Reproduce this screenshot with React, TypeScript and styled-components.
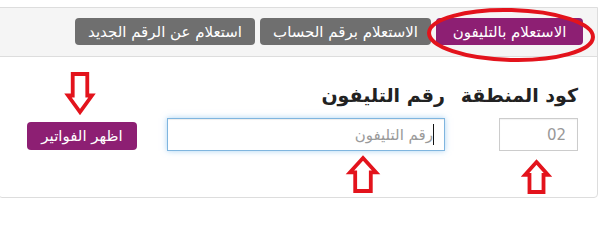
import styled, { createGlobalStyle } from 'styled-components';

const GlobalStyle = createGlobalStyle`
  html, body {
    margin: 0;
    padding: 0;
    background: #ffffff;
  }
  body {
    font-family: "DejaVu Sans", "Noto Sans", sans-serif;
    overflow: hidden;
  }
`;

const Panel = styled.div`
  position: relative;
  direction: rtl;
  width: 600px;
  margin: 7px 0 0 -2px;
  border: 1px solid #dddddd;
  border-radius: 0 0 4px 4px;
  box-sizing: border-box;
  background: #ffffff;
`;

const TabBar = styled.div`
  display: flex;
  gap: 5px;
  padding: 10px 14px 11px;
  background: #f5f5f5;
  border-bottom: 1px solid #dddddd;
`;

const Tab = styled.button<{ $active?: boolean; $w: number }>`
  width: ${(p) => p.$w}px;
  height: 27px;
  padding: 0;
  border: none;
  border-radius: 4px;
  background: ${(p) => (p.$active ? '#8d1f73' : '#6f6f6f')};
  color: #ffffff;
  font-family: "DejaVu Sans", sans-serif;
  font-size: 15px;
  direction: rtl;
  cursor: pointer;
`;

const Body = styled.div`
  display: flex;
  align-items: flex-end;
  padding: 25px 19px 46px;
`;

const Field = styled.div<{ $w: number; $gap?: number }>`
  display: flex;
  flex-direction: column;
  align-items: flex-start;
  width: ${(p) => p.$w}px;
  margin-right: ${(p) => p.$gap ?? 0}px;
`;

const Label = styled.label`
  white-space: nowrap;
  font-size: 19px;
  font-weight: bold;
  line-height: 26px;
  color: #222222;
  margin-bottom: 10px;
`;

const InputWrap = styled.div`
  position: relative;
  width: 100%;
`;

const TextInput = styled.input<{ $focus?: boolean }>`
  box-sizing: border-box;
  width: 100%;
  height: 33px;
  padding: 0 11px;
  direction: rtl;
  font-family: "DejaVu Sans", sans-serif;
  font-size: 15px;
  color: #999999;
  border: 1px solid ${(p) => (p.$focus ? '#7fb5df' : '#cccccc')};
  box-shadow: ${(p) =>
    p.$focus
      ? 'inset 0 1px 1px rgba(0,0,0,.075), 0 0 6px rgba(102,175,233,.55)'
      : 'inset 0 1px 1px rgba(0,0,0,.05)'};
  outline: none;
  background: #ffffff;
  &::placeholder {
    color: #9a9a9a;
  }
`;

const Caret = styled.span`
  position: absolute;
  right: 11px;
  top: 6px;
  width: 1px;
  height: 21px;
  background: #111111;
`;

const ShowButton = styled.button`
  width: 110px;
  height: 28px;
  margin: 0 30px 1px 0;
  padding: 0;
  border: none;
  border-radius: 4px;
  background: #8d1f73;
  color: #ffffff;
  font-family: "DejaVu Sans", sans-serif;
  font-size: 15px;
  cursor: pointer;
`;

const Mark = styled.svg<{ $x: number; $y: number }>`
  position: absolute;
  left: ${(p) => p.$x}px;
  top: ${(p) => p.$y}px;
  overflow: visible;
  pointer-events: none;
`;

function Arrow({ x, y, w, h, up }: { x: number; y: number; w: number; h: number; up?: boolean }) {
  const s = w * 0.26;
  const hh = h * 0.44;
  const d = up
    ? `M${w / 2} 2 L${w - 2} ${hh} L${w / 2 + s} ${hh} L${w / 2 + s} ${h - 2} L${w / 2 - s} ${h - 2} L${w / 2 - s} ${hh} L2 ${hh} Z`
    : `M${w / 2 - s} 2 L${w / 2 + s} 2 L${w / 2 + s} ${h - hh} L${w - 2} ${h - hh} L${w / 2} ${h - 2} L2 ${h - hh} L${w / 2 - s} ${h - hh} Z`;
  return (
    <Mark $x={x} $y={y} width={w} height={h} viewBox={`0 0 ${w} ${h}`}>
      <path d={d} fill="#ffffff" stroke="#e3131c" strokeWidth={3.8} strokeLinejoin="miter" />
    </Mark>
  );
}

export default function App() {
  return (
    <>
      <GlobalStyle />
      <Panel>
        <TabBar>
          <Tab $active $w={147}>الاستعلام بالتليفون</Tab>
          <Tab $w={171}>الاستعلام برقم الحساب</Tab>
          <Tab $w={180}>استعلام عن الرقم الجديد</Tab>
        </TabBar>
        <Body>
          <Field $w={79}>
            <Label>كود المنطقة</Label>
            <TextInput defaultValue="02" />
          </Field>
          <Field $w={278} $gap={54}>
            <Label>رقم التليفون</Label>
            <InputWrap>
              <TextInput $focus placeholder="رقم التليفون" />
              <Caret />
            </InputWrap>
          </Field>
          <ShowButton>اظهر الفواتير</ShowButton>
        </Body>
        <Mark $x={427} $y={-1} width={170} height={58} viewBox="0 0 170 58">
          <ellipse cx={85} cy={28} rx={82} ry={25} fill="none" stroke="#e3131c" strokeWidth={4} transform="rotate(1.5 85 28)" />
        </Mark>
        <Arrow x={67} y={64} w={28} h={42} />
        <Arrow x={349} y={148} w={30} h={37} up />
        <Arrow x={524} y={152} w={27} h={34} up />
      </Panel>
    </>
  );
}
